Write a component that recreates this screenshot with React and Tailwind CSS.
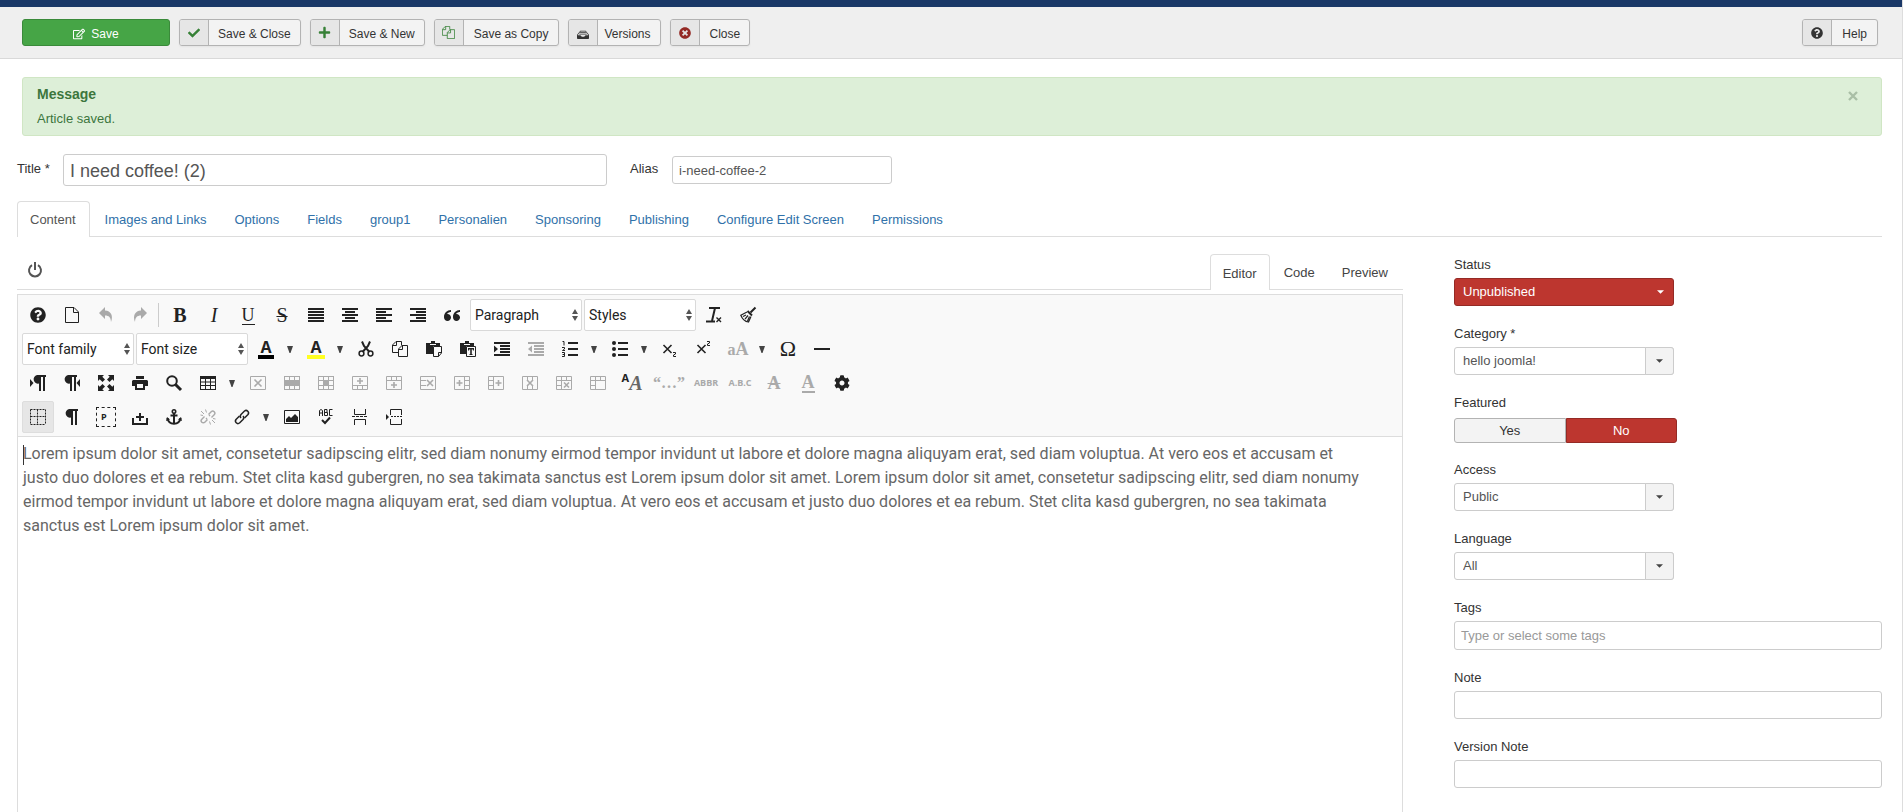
import { useState } from "react";
import { FaCheck, FaCog, FaPlus, FaQuestionCircle, FaRegEdit, FaTimesCircle } from "react-icons/fa";
import { ImDrawer, ImQuotesLeft } from "react-icons/im";

const FIELD = "rounded-[3px] border border-[#ccc] bg-white text-[#555] outline-none";

const COPY = (
  <g fill="none" stroke="currentColor">
    <path d="M9.5 4.5V0.5H4L0.5 4V11.5H6.5M4.5 0.5V4.5H0.5" />
    <path d="M6.5 8L10 4.5H15.5V15.5H6.5ZM10.5 4.5V8.5H6.5" />
  </g>
);

const PILCROW = "M5 0H14V2H13V16H11V2H9V16H7V8.5A4.25 4.25 0 0 1 5 0Z";
const TABLE = "M0 1H16V15H0ZM1 4V6.5H5V4ZM6 4V6.5H10V4ZM11 4V6.5H15V4ZM1 7.5V10H5V7.5ZM6 7.5V10H10V7.5ZM11 7.5V10H15V7.5ZM1 11V14H5V11ZM6 11V14H10V11ZM11 11V14H15V11Z";

function AlignLines({ short }) {
  return (
    <path d={`M0 1H16V3H0ZM${short[0]} 4H${short[1]}V6H${short[0]}ZM0 7H16V9H0ZM${short[0]} 10H${short[1]}V12H${short[0]}ZM0 13H16V15H0Z`} />
  );
}

// table outline plus the strokes of one table command
function GridOutline({ d, bold }) {
  return (
    <g fill="none" stroke="currentColor">
      <path d={`M0.5 1.5H15.5V14.5H0.5Z${d}`} />
      {bold && <path d={bold} strokeWidth="1.6" />}
    </g>
  );
}

function Serif({ children, className = "" }) {
  return <span className={`font-['Liberation_Serif',serif] leading-none ${className}`}>{children}</span>;
}

const GLYPHS = {
  newdocument: <path d="M1.5 0.5H10L14.5 5V15.5H1.5ZM9.5 0.5V5.5H14.5" fill="none" stroke="currentColor" />,
  undo: <path d="M7 0V3.5C13 4 15.5 8.5 13 15C12.8 10.5 11 8.5 7 8.5V12L1 6Z" />,
  redo: <path d="M9 0V3.5C3 4 0.5 8.5 3 15C3.2 10.5 5 8.5 9 8.5V12L15 6Z" />,
  justifyfull: <AlignLines short={[0, 16]} />,
  justifycenter: <AlignLines short={[3, 13]} />,
  justifyleft: <AlignLines short={[0, 10]} />,
  justifyright: <AlignLines short={[6, 16]} />,
  removeformat: (
    <g fill="none" stroke="currentColor">
      <path d="M3 1H14M9 1L6 14" strokeWidth="2" />
      <path d="M0 14.5H9" strokeWidth="2" />
      <path d="M10.5 10.5L15 15M15 10.5L10.5 15" strokeWidth="1.4" />
    </g>
  ),
  cleanup: (
    <g fill="none" stroke="currentColor">
      <path d="M15.5 0.5L10.5 5.5" strokeWidth="2" />
      <path d="M7.5 4L12 8.5" strokeWidth="2" />
      <path d="M7 5L0.8 8.2C2.5 12.5 5 14.5 8.5 15L11 9.5M3 9.5L6 8M5 12.2L8 8.5M7.5 14L9.5 9.5" strokeWidth="1.2" />
    </g>
  ),
  cut: (
    <g fill="none" stroke="currentColor">
      <circle cx="3.5" cy="12.5" r="2.4" strokeWidth="1.5" />
      <circle cx="12.5" cy="12.5" r="2.4" strokeWidth="1.5" />
      <path d="M4 0.5L6 5L11.5 11M12 0.5L10 5L4.5 11" strokeWidth="2" />
    </g>
  ),
  copy: COPY,
  paste: (
    <>
      <path d="M5 0H9V2H14V5H7V13H0V2H5Z" />
      <path d="M4 3.5H10" stroke="#f9f9f9" />
      <path d="M7.5 5.5H15.5V12L12.5 15.5H7.5ZM15.5 11.5H12.5V15.5" fill="#f9f9f9" stroke="currentColor" />
    </>
  ),
  pastetext: (
    <>
      <path d="M5 0H9V2H14V5H6V13H0V2H5Z" />
      <path d="M4 3.5H10" stroke="#f9f9f9" />
      <path d="M6.5 5.5H15.5V15.5H6.5Z" fill="#f9f9f9" stroke="currentColor" />
      <path d="M8 7H14V9.5H13L12.5 8.3H11.8V13L12.6 13.3V14H9.4V13.3L10.2 13V8.3H9.5L9 9.5H8Z" />
    </>
  ),
  indent: <path d="M0 1H16V3H0ZM6 4H16V6H6ZM6 7H16V9H6ZM6 10H16V12H6ZM0 13H16V15H0ZM0 4.5L4 8L0 11.5Z" />,
  outdent: <path d="M0 1H16V3H0ZM6 4H16V6H6ZM6 7H16V9H6ZM6 10H16V12H6ZM0 13H16V15H0ZM4 4.5L0 8L4 11.5Z" />,
  numlist: (
    <>
      <path d="M6 1H16V3H6ZM6 7H16V9H6ZM6 13H16V15H6Z" />
      <path d="M0.5 0.5H2V4.5M0 6.5H2.5V8L0.5 9.5H3M0 11.5H2.5V15.5H0M0.5 13.5H2.5" fill="none" stroke="currentColor" />
    </>
  ),
  bullist: (
    <>
      <path d="M6 1H16V3H6ZM6 7H16V9H6ZM6 13H16V15H6Z" />
      <circle cx="2" cy="2" r="2" />
      <circle cx="2" cy="8" r="2" />
      <circle cx="2" cy="14" r="2" />
    </>
  ),
  sub: (
    <g fill="none" stroke="currentColor">
      <path d="M1.5 4L9.5 12M9.5 4L1.5 12" strokeWidth="1.6" />
      <path d="M11 11.5H13.5V13L11.5 14V15.5H14" />
    </g>
  ),
  sup: (
    <g fill="none" stroke="currentColor">
      <path d="M1.5 4L9.5 12M9.5 4L1.5 12" strokeWidth="1.6" />
      <path d="M11 0.5H13.5V2L11.5 3V4.5H14" />
    </g>
  ),
  hr: <path d="M0 7H16V9H0Z" />,
  ltr: (
    <>
      <path d={PILCROW} transform="translate(2 0)" />
      <path d="M0 4L3.5 8L0 12Z" />
    </>
  ),
  rtl: (
    <>
      <path d={PILCROW} transform="translate(-1 0)" />
      <path d="M16 4L12.5 8L16 12Z" />
    </>
  ),
  fullscreen: (
    <path d="M0 0H6L4.3 1.7L7 4.5L4.5 7L1.7 4.3L0 6ZM16 0H10L11.7 1.7L9 4.5L11.5 7L14.3 4.3L16 6ZM0 16H6L4.3 14.3L7 11.5L4.5 9L1.7 11.7L0 10ZM16 16H10L11.7 14.3L9 11.5L11.5 9L14.3 11.7L16 10Z" />
  ),
  print: <path fillRule="evenodd" d="M4 1H12V4H4ZM1 5H15L16 6V11H13V15H3V11H0V6ZM5 9V13H11V9Z" />,
  search: (
    <g fill="none" stroke="currentColor">
      <circle cx="6" cy="6" r="4.8" strokeWidth="2" />
      <path d="M9.5 9.5L15 15" strokeWidth="3" />
    </g>
  ),
  table: <path fillRule="evenodd" d={TABLE} />,
  deletetable: <GridOutline d="" bold="M4.5 4.5L11.5 11.5M11.5 4.5L4.5 11.5" />,
  rowprops: <path fillRule="evenodd" d="M0 1H16V15H0ZM1 2V5H5V2ZM6 2V5H10V2ZM11 2V5H15V2ZM1 11V14H5V11ZM6 11V14H10V11ZM11 11V14H15V11Z" />,
  cellprops: <path fillRule="evenodd" d="M0 1H16V15H0ZM1 2V5H5V2ZM6 2V5H10V2ZM11 2V5H15V2ZM1 6V10H5V6ZM11 6V10H15V6ZM1 11V14H5V11ZM6 11V14H10V11ZM11 11V14H15V11Z" />,
  rowbefore: <GridOutline d="M0.5 10.5H15.5M5.5 10.5V14.5M10.5 10.5V14.5" bold="M8 3V9M5 6H11" />,
  rowafter: <GridOutline d="M0.5 5.5H15.5M5.5 1.5V5.5M10.5 1.5V5.5" bold="M8 7V13M5 10H11" />,
  deleterow: <GridOutline d="M0.5 5.5H6M0.5 10.5H6" bold="M7 5L13 11M13 5L7 11" />,
  colbefore: <GridOutline d="M10.5 1.5V14.5M10.5 5.5H15.5M10.5 10.5H15.5" bold="M5.5 5V11M2.5 8H8.5" />,
  colafter: <GridOutline d="M5.5 1.5V14.5M0.5 5.5H5.5M0.5 10.5H5.5" bold="M10.5 5V11M7.5 8H13.5" />,
  deletecol: <GridOutline d="M5.5 1.5V5M10.5 1.5V5M5.5 11V14.5M10.5 11V14.5" bold="M5 5L11 11M11 5L5 11" />,
  splitcells: <GridOutline d="M0.5 5.5H15.5M5.5 1.5V14.5M10.5 1.5V5.5M0.5 10.5H5.5" bold="M8 7.5L13 12.5M13 7.5L8 12.5" />,
  mergecells: <GridOutline d="M0.5 5.5H15.5M5.5 1.5V14.5M10.5 1.5V5.5M0.5 10.5H5.5" />,
  visualaid: (
    <g fill="none" stroke="currentColor" strokeDasharray="2 1">
      <path d="M0.5 0.5H15.5M0.5 7.5H15.5M0.5 15.5H15.5M0.5 0.5V15.5M7.5 0.5V15.5M15.5 0.5V15.5" />
    </g>
  ),
  visualchars: <path d={PILCROW} />,
  nonbreaking: (
    <g fill="none" stroke="currentColor">
      <path d="M1 9V15H15V9" strokeWidth="2" />
      <path d="M8 4V12M4 8H12" strokeWidth="2" />
    </g>
  ),
  anchor: (
    <g fill="none" stroke="currentColor">
      <circle cx="8" cy="2.5" r="1.7" strokeWidth="1.6" />
      <path d="M8 4V15M4.5 6.5H11.5" strokeWidth="2" />
      <path d="M1.5 9C2 13 5 14.7 8 14.7S14 13 14.5 9" strokeWidth="2" />
      <path d="M0 12L1 8L4 10.5ZM16 12L15 8L12 10.5Z" fill="currentColor" stroke="none" />
    </g>
  ),
  unlink: (
    <g fill="none" stroke="currentColor" strokeWidth="1.4">
      <path d="M8.5 5.5L11.2 2.8A2.1 2.1 0 0 1 14.2 5.8L11.5 8.5M7.5 10.5L4.8 13.2A2.1 2.1 0 0 1 1.8 10.2L4.5 7.5M6 10L7 9M9 7L10 6" />
      <path d="M1 2L4 5M5.5 0.5L6.5 3.5M0.5 6L3 6.5M15 14L12 11M10.5 15.5L9.5 12.5M15.5 10L13 9.5" strokeWidth="1" />
    </g>
  ),
  link: (
    <g fill="none" stroke="currentColor" strokeWidth="1.5">
      <path d="M7 9A2.6 2.6 0 0 1 7 5.5L10.5 2A2.5 2.5 0 0 1 14 5.5L10.5 9" />
      <path d="M9 7A2.6 2.6 0 0 1 9 10.5L5.5 14A2.5 2.5 0 0 1 2 10.5L5.5 7" />
    </g>
  ),
  image: (
    <>
      <path d="M0.5 1.5H15.5V14.5H0.5Z" fill="none" stroke="currentColor" />
      <path d="M2 13V10L5 7L7 9L11 5L14 8V13Z" />
    </>
  ),
  spellcheck: (
    <g fill="none" stroke="currentColor">
      <path d="M1.5 7V1.5L3 0.5L4.5 1.5V7M1.5 4H4.5M6.5 0.5V6.5H9.5V3.5H6.5M6.5 0.5H9V3.5M14.5 0.5H11.5V6.5H14.5" />
      <path d="M4 11L7 14L12 8.5" strokeWidth="2" />
    </g>
  ),
  readmore: (
    <g fill="none" stroke="currentColor">
      <path d="M2.5 0V5.5H13.5V0M2.5 16V10.5H13.5V16" />
      <path d="M0 7.5H16" strokeDasharray="3 1" />
    </g>
  ),
  pagebreak: (
    <g fill="none" stroke="currentColor">
      <path d="M4.5 6V0.5H15.5V6M4.5 10V15.5H15.5V10" />
      <path d="M5 7.5H16" strokeDasharray="2 1" />
      <path d="M0 5L3 8L0 11Z" fill="currentColor" stroke="none" />
    </g>
  ),
};

const TEXT_GLYPHS = {
  bold: <Serif className="text-[20px] font-bold">B</Serif>,
  italic: <Serif className="text-[20px] italic">I</Serif>,
  underline: <Serif className="border-b border-current text-[18px] leading-4">U</Serif>,
  strike: <Serif className="text-[20px] line-through decoration-1">S</Serif>,
  help: <FaQuestionCircle size={16} />,
  blockquote: <ImQuotesLeft size={16} />,
  gear: <FaCog size={16} />,
  forecolor: <span className="flex h-[19px] w-4 items-start justify-center border-b-4 border-black font-['Open_Sans',sans-serif] text-base leading-[14px] font-bold">A</span>,
  backcolor: <span className="flex h-[19px] w-[18px] items-start justify-center border-b-4 border-[#ff2] font-['Open_Sans',sans-serif] text-base leading-[14px] font-bold">A</span>,
  textcase: <Serif className="text-base font-bold">a<span className="text-lg">A</span></Serif>,
  charmap: <Serif className="text-[22px]">Ω</Serif>,
  style: (
    <span className="flex items-start font-bold">
      <span className="font-['Open_Sans',sans-serif] text-[11px] leading-[10px]">A</span>
      <Serif className="text-[20px] text-[#666] italic">A</Serif>
    </span>
  ),
  cite: <Serif className="text-base font-bold">“…”</Serif>,
  abbr: <span className="font-['Open_Sans',sans-serif] text-[9px] font-bold">ABBR</span>,
  acronym: <span className="font-['Open_Sans',sans-serif] text-[9px] font-bold">A.B.C</span>,
  del: <Serif className="text-lg font-bold line-through decoration-1">A</Serif>,
  ins: <Serif className="border-b-2 border-current text-lg leading-4 font-bold">A</Serif>,
  visualblocks: (
    <span className="flex size-5 items-start border border-dashed border-current pt-1 pl-1 font-['Open_Sans',sans-serif] text-[9px] leading-[9px] font-bold">P</span>
  ),
};

const ROWS = [
  [
    "help", "newdocument", "undo:off", "redo:off", "|", "bold", "italic", "underline", "strike",
    "justifyfull", "justifycenter", "justifyleft", "justifyright", "blockquote",
    "select:Paragraph", "select:Styles", "removeformat", "cleanup",
  ],
  [
    "select:Font family", "select:Font size", "forecolor", "v", "backcolor", "v", "cut", "copy", "paste",
    "pastetext", "indent", "outdent:off", "numlist", "v", "bullist", "v", "sub", "sup", "textcase:off", "v", "charmap", "hr",
  ],
  [
    "ltr", "rtl", "fullscreen", "print", "search", "table", "v", "deletetable:off", "rowprops:off", "cellprops:off",
    "rowbefore:off", "rowafter:off", "deleterow:off", "colbefore:off", "colafter:off", "deletecol:off",
    "splitcells:off", "mergecells:off", "style", "cite:off", "abbr:off", "acronym:off", "del:off", "ins:off", "gear",
  ],
  [
    "visualaid:on", "visualchars", "visualblocks", "nonbreaking", "anchor", "unlink:off", "link", "v", "image",
    "spellcheck", "readmore", "pagebreak",
  ],
];

const TABS = [
  "Content", "Images and Links", "Options", "Fields", "group1", "Personalien",
  "Sponsoring", "Publishing", "Configure Edit Screen", "Permissions",
];

const LOREM = [
  "Lorem ipsum dolor sit amet, consetetur sadipscing elitr, sed diam nonumy eirmod tempor invidunt ut labore et dolore magna aliquyam erat, sed diam voluptua. At vero eos et accusam et",
  "justo duo dolores et ea rebum. Stet clita kasd gubergren, no sea takimata sanctus est Lorem ipsum dolor sit amet. Lorem ipsum dolor sit amet, consetetur sadipscing elitr, sed diam nonumy",
  "eirmod tempor invidunt ut labore et dolore magna aliquyam erat, sed diam voluptua. At vero eos et accusam et justo duo dolores et ea rebum. Stet clita kasd gubergren, no sea takimata",
  "sanctus est Lorem ipsum dolor sit amet.",
];

function ToolbarButton({ icon, padding = "px-[10px]", children }) {
  return (
    <button type="button" className="flex h-[27px] overflow-hidden rounded-[3px] border border-[#b3b3b3] bg-[#f3f3f3] text-xs text-[#333] shadow-xs">
      <span className="flex h-full w-[29px] items-center justify-center border-r border-[#b3b3b3] bg-[#e6e6e6]">{icon}</span>
      <span className={`flex h-full items-center pt-[2px] ${padding}`}>{children}</span>
    </button>
  );
}

function EditorSelect({ label }) {
  return (
    <div className="mr-[2px] grid h-8 w-28 items-center">
      <select aria-label={label} className="col-start-1 row-start-1 h-8 w-full appearance-none rounded-[2px] border border-[#d9d9d9] bg-white pl-1 font-[Roboto,sans-serif] text-sm text-[#222] outline-none">
        <option>{label}</option>
      </select>
      <svg viewBox="0 0 6 12" className="pointer-events-none col-start-1 row-start-1 mr-1 h-3 w-[6px] justify-self-end fill-[#555]">
        <path d="M3 0L6 5H0ZM3 12L0 7H6Z" />
      </svg>
    </div>
  );
}

function EditorTool({ item }) {
  if (item === "|") return <span className="mr-[5px] h-6 w-px bg-[#ccc]" />;
  if (item === "v") {
    return (
      <button type="button" aria-label="More" className="-ml-[2px] mr-[2px] flex h-8 w-4 items-center justify-center text-[#444]">
        <svg viewBox="0 0 6 7" className="h-[7px] w-[6px] fill-current">
          <path d="M0 0H6L3.5 7H2.5Z" />
        </svg>
      </button>
    );
  }
  const [name, arg] = item.split(":");
  if (name === "select") return <EditorSelect label={arg} />;
  const tone = arg === "off" ? "text-[#aaa]" : "text-[#222]";
  const active = arg === "on" ? "rounded-[2px] border border-[#ddd] bg-[#e6e6e6]" : "";
  const width = name === "cite" ? "w-[38px]" : "w-8";
  return (
    <button type="button" aria-label={name} className={`mr-[2px] flex h-8 shrink-0 items-center justify-center ${width} ${tone} ${active}`}>
      {TEXT_GLYPHS[name] || (
        <svg viewBox="0 0 16 16" className="size-4 shrink-0 overflow-visible fill-current">{GLYPHS[name]}</svg>
      )}
    </button>
  );
}

function SideField({ id, label, children }) {
  return (
    <div className="mb-[19px]">
      <label htmlFor={id} className="mb-1 block leading-[18px] text-[#333]">{label}</label>
      {children}
    </div>
  );
}

function SideSelect({ id, value }) {
  return (
    <div className="grid h-7 w-[220px]">
      <select id={id} className={`${FIELD} col-start-1 row-start-1 appearance-none pl-2 text-[#444]`}>
        <option>{value}</option>
      </select>
      <span className="pointer-events-none col-start-1 row-start-1 flex w-[29px] items-center justify-center justify-self-end rounded-r-[3px] border border-[#ccc] bg-[#f3f3f3]">
        <svg viewBox="0 0 8 4" className="h-1 w-[7px] fill-[#444]"><path d="M0 0H8L4 4Z" /></svg>
      </span>
    </div>
  );
}

export default function App() {
  const [title, setTitle] = useState("I need coffee! (2)");
  const [alias, setAlias] = useState("i-need-coffee-2");
  const [featured, setFeatured] = useState("No");

  return (
    <div className="mr-px flex min-h-screen flex-col border-r border-[#ddd] bg-white font-['Liberation_Sans',Arial,sans-serif] text-[13px] text-[#333]">
      <div className="h-[7px] bg-[#1a3867]" />
      <header className="flex h-[52px] items-center justify-between border-b border-[#d9d9d9] bg-[#efefef] pr-6 pl-[22px]">
        <div className="flex gap-[9px]">
          <button type="button" className="flex h-[27px] w-[148px] items-center justify-center gap-[6px] rounded-[3px] border border-[#3a8a3a] bg-[#46a546] pt-[2px] text-xs text-white">
            <FaRegEdit size={12} />
            Save
          </button>
          <ToolbarButton padding="px-[9px]" icon={<FaCheck size={12} className="text-[#378137]" />}>Save &amp; Close</ToolbarButton>
          <ToolbarButton padding="px-[9px]" icon={<FaPlus size={13} className="text-[#378137]" />}>Save &amp; New</ToolbarButton>
          <ToolbarButton icon={<svg viewBox="0 0 16 16" className="size-[13px] text-[#378137]">{COPY}</svg>}>Save as Copy</ToolbarButton>
          <ToolbarButton padding="pr-[10px] pl-[6px]" icon={<ImDrawer size={12} />}>Versions</ToolbarButton>
          <ToolbarButton padding="px-[9px]" icon={<FaTimesCircle size={12} className="text-[#942a25]" />}>Close</ToolbarButton>
        </div>
        <ToolbarButton icon={<FaQuestionCircle size={12} />}>Help</ToolbarButton>
      </header>

      <div className="mt-[18px] mr-5 ml-[22px] flex items-start justify-between rounded-[3px] border border-[#d0e6c4] bg-[#ddefd8] pt-[6px] pr-[23px] pb-[7px] pl-[14px] text-[#3c763d]">
        <div>
          <h4 className="text-sm leading-5 font-bold">Message</h4>
          <p className="mt-[6px] leading-[18px]">Article saved.</p>
        </div>
        <button type="button" aria-label="Close" className="mt-[7px] text-[#a9bfa6]">
          <svg viewBox="0 0 10 10" className="size-[10px]" fill="none" stroke="currentColor" strokeWidth="2.4">
            <path d="M1 1L9 9M9 1L1 9" />
          </svg>
        </button>
      </div>

      <div className="mt-[18px] flex items-center pl-[17px]">
        <label htmlFor="title" className="w-[46px] pb-[3px]">Title *</label>
        <input id="title" value={title} onChange={(e) => setTitle(e.target.value)} className={`${FIELD} h-8 w-[544px] px-[6px] pt-[2px] text-lg`} />
        <label htmlFor="alias" className="ml-[23px] w-[42px] pb-[3px]">Alias</label>
        <input id="alias" value={alias} onChange={(e) => setAlias(e.target.value)} className={`${FIELD} h-7 w-[220px] px-[6px] pt-px`} />
      </div>

      <nav className="mt-[15px] mr-5 ml-[17px] flex gap-[2px] border-b border-[#ddd]">
        {TABS.map((tab, i) => (
          <a
            key={tab}
            href="#"
            className={
              i === 0
                ? "-mb-px h-9 rounded-t-[4px] border border-b-0 border-[#ddd] bg-white pr-[13px] pl-3 leading-[35px] text-[#555]"
                : "h-[35px] px-[13px] leading-[37px] text-[#3071a9]"
            }
          >
            {tab}
          </a>
        ))}
      </nav>

      <main className="mr-5 ml-[17px] flex flex-1 gap-[51px] pt-[17px]">
        <section className="flex min-w-0 flex-1 flex-col">
          <div className="flex items-start justify-between border-b border-[#ddd]">
            <button type="button" aria-label="Toggle editor" className="mt-2 ml-[10px] text-[#555]">
              <svg viewBox="0 0 16 16" className="size-4" fill="none" stroke="currentColor" strokeWidth="2">
                <path d="M5 3.2A6 6 0 1 0 11 3.2M8 0V8" />
              </svg>
            </button>
            <div className="flex pr-[2px] text-[#444]">
              <button type="button" className="-mb-px h-9 rounded-t-[4px] border border-b-0 border-[#ddd] bg-white px-3 pt-[2px]">Editor</button>
              <button type="button" className="h-[35px] px-[14px] pt-[2px]">Code</button>
              <button type="button" className="h-[35px] px-[13px] pt-[2px]">Preview</button>
            </div>
          </div>

          <div className="mt-1 flex flex-1 flex-col border border-b-0 border-[#ddd]">
            <div className="flex flex-col gap-[2px] border-b border-[#ddd] bg-[#f9f9f9] px-1 pt-1 pb-[3px]">
              {ROWS.map((row, i) => (
                <div key={i} className="flex items-center">
                  {row.map((item, j) => (
                    <EditorTool key={j} item={item} />
                  ))}
                </div>
              ))}
            </div>
            <div className="flex-1 px-[5px] pt-[5px] font-[Roboto,sans-serif] text-base leading-6 text-[#666]">
              <p>
                <span className="-mr-px inline-block h-5 w-px bg-[#333] align-middle" />
                {LOREM.map((line) => (
                  <span key={line}>
                    {line}
                    <br />
                  </span>
                ))}
              </p>
            </div>
          </div>
        </section>

        <aside className="w-[428px] shrink-0 pt-[2px]">
          <SideField id="status" label="Status">
            <div className="grid h-7 w-[220px] items-center">
              <select id="status" className="col-start-1 row-start-1 h-7 appearance-none rounded-[3px] border border-[#942a25] bg-[#bd362f] pl-2 text-white outline-none">
                <option>Unpublished</option>
              </select>
              <svg viewBox="0 0 8 4" className="pointer-events-none col-start-1 row-start-1 mr-[10px] h-1 w-[7px] justify-self-end fill-white"><path d="M0 0H8L4 4Z" /></svg>
            </div>
          </SideField>
          <SideField id="category" label="Category *">
            <SideSelect id="category" value="hello joomla!" />
          </SideField>
          <fieldset className="mb-[18px]">
            <legend className="mb-[6px] leading-[18px]">Featured</legend>
            <div className="flex w-[223px]">
              {["Yes", "No"].map((option) => (
                <label
                  key={option}
                  className={`flex h-[25px] flex-1 items-center justify-center border first:rounded-l-[3px] last:rounded-r-[3px] ${
                    featured === option ? "border-[#942a25] bg-[#bd362f] text-white" : "border-[#b3b3b3] bg-[#f3f3f3] text-[#333]"
                  }`}
                >
                  <input type="radio" name="featured" className="sr-only" checked={featured === option} onChange={() => setFeatured(option)} />
                  {option}
                </label>
              ))}
            </div>
          </fieldset>
          <SideField id="access" label="Access">
            <SideSelect id="access" value="Public" />
          </SideField>
          <SideField id="language" label="Language">
            <SideSelect id="language" value="All" />
          </SideField>
          <SideField id="tags" label="Tags">
            <input id="tags" placeholder="Type or select some tags" className={`${FIELD} block h-[29px] w-full px-[6px] placeholder:text-[#999]`} />
          </SideField>
          <SideField id="note" label="Note">
            <input id="note" className={`${FIELD} block h-7 w-full px-[6px]`} />
          </SideField>
          <SideField id="version-note" label="Version Note">
            <input id="version-note" className={`${FIELD} block h-7 w-full px-[6px]`} />
          </SideField>
        </aside>
      </main>
    </div>
  );
}
